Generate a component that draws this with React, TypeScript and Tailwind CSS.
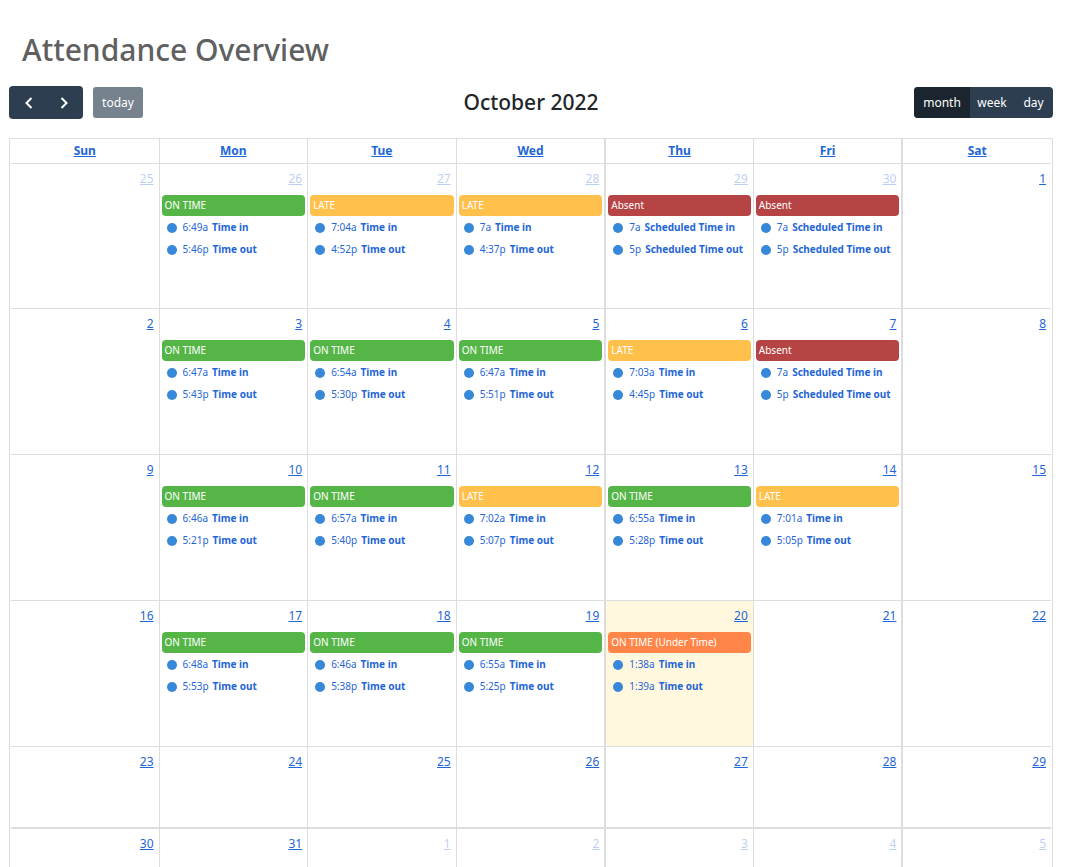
import { useState } from "react";

type Status = "ontime" | "late" | "absent" | "under";
type Day = { date: number; other?: boolean; today?: boolean; status?: Status; entries?: [string, string][] };

const dayNames = ["Sun", "Mon", "Tue", "Wed", "Thu", "Fri", "Sat"];

const statusStyle: Record<Status, string> = {
  ontime: "bg-[#55b647]",
  late: "bg-[#ffc04c]",
  absent: "bg-[#b64444]",
  under: "bg-[#ff8648]",
};

const statusLabel: Record<Status, string> = {
  ontime: "ON TIME",
  late: "LATE",
  absent: "Absent",
  under: "ON TIME (Under Time)",
};

const worked = (date: number, status: Status, timeIn: string, timeOut: string, extra: Partial<Day> = {}): Day => ({
  date,
  status,
  entries: [
    [timeIn, "Time in"],
    [timeOut, "Time out"],
  ],
  ...extra,
});

const absent = (date: number, extra: Partial<Day> = {}): Day => ({
  date,
  status: "absent",
  entries: [
    ["7a", "Scheduled Time in"],
    ["5p", "Scheduled Time out"],
  ],
  ...extra,
});

const other = { other: true };

const weeks: { height: string; days: Day[] }[] = [
  {
    height: "h-[145px]",
    days: [
      { date: 25, other: true },
      worked(26, "ontime", "6:49a", "5:46p", other),
      worked(27, "late", "7:04a", "4:52p", other),
      worked(28, "late", "7a", "4:37p", other),
      absent(29, other),
      absent(30, other),
      { date: 1 },
    ],
  },
  {
    height: "h-[146px]",
    days: [
      { date: 2 },
      worked(3, "ontime", "6:47a", "5:43p"),
      worked(4, "ontime", "6:54a", "5:30p"),
      worked(5, "ontime", "6:47a", "5:51p"),
      worked(6, "late", "7:03a", "4:45p"),
      absent(7),
      { date: 8 },
    ],
  },
  {
    height: "h-[146px]",
    days: [
      { date: 9 },
      worked(10, "ontime", "6:46a", "5:21p"),
      worked(11, "ontime", "6:57a", "5:40p"),
      worked(12, "late", "7:02a", "5:07p"),
      worked(13, "ontime", "6:55a", "5:28p"),
      worked(14, "late", "7:01a", "5:05p"),
      { date: 15 },
    ],
  },
  {
    height: "h-[146px]",
    days: [
      { date: 16 },
      worked(17, "ontime", "6:48a", "5:53p"),
      worked(18, "ontime", "6:46a", "5:38p"),
      worked(19, "ontime", "6:55a", "5:25p"),
      worked(20, "under", "1:38a", "1:39a", { today: true }),
      { date: 21 },
      { date: 22 },
    ],
  },
  {
    height: "h-[81px]",
    days: [23, 24, 25, 26, 27, 28, 29].map((date) => ({ date })),
  },
  {
    height: "h-[82px]",
    days: [{ date: 30 }, { date: 31 }, ...[1, 2, 3, 4, 5].map((date) => ({ date, other: true }))],
  },
];

/* Vertical rules between columns; Thursday and Saturday open with a doubled rule. */
const columnRule = (col: number) => `${col < 6 ? "border-r" : ""} ${col === 4 || col === 6 ? "border-l" : ""}`;

function Chevron({ d }: { d: string }) {
  return (
    <svg viewBox="0 0 16 16" className="size-4" fill="none" stroke="currentColor" strokeWidth="2" aria-hidden="true">
      <path d={d} />
    </svg>
  );
}

function DayCell({ day, col, lastWeek }: { day: Day; col: number; lastWeek: boolean }) {
  return (
    <td
      className={`border-[#dddddd] p-0 align-top ${lastWeek ? "border-t-2" : "border-t"} ${columnRule(col)} ${day.today ? "bg-[#fff8df]" : ""}`}
    >
      <div className={`flex h-[31px] justify-end pr-[5px] text-[12px] leading-[30px] ${day.other ? "opacity-30" : ""}`}>
        <a href="#" className="text-[#1f66d6] underline">
          {day.date}
        </a>
      </div>
      {day.status && (
        <div className="mx-[2px] text-[10px]">
          <a href="#" className={`block h-[21px] rounded-[4px] px-[3px] leading-[20px] text-white ${statusStyle[day.status]}`}>
            {statusLabel[day.status]}
          </a>
          {day.entries?.map(([time, label]) => (
            <a key={label} href="#" className="flex h-[22px] items-center whitespace-nowrap pl-[5px] text-[#1f66d6]">
              <span className="mr-[6px] mt-[2px] size-[10px] shrink-0 rounded-full bg-[#3788d8]" />
              <span className="mr-[4px]">{time}</span>
              <span className="font-bold">{label}</span>
            </a>
          ))}
        </div>
      )}
    </td>
  );
}

export default function App() {
  const [view, setView] = useState("month");
  return (
    <main className="h-screen overflow-hidden bg-white pl-[9px] pr-[19px] pt-[30px] font-['Noto_Sans','Open_Sans',sans-serif] text-[#212529]">
      <h1 className="pl-[13px] text-[30px] font-medium leading-[40px] text-[#606060]">Attendance Overview</h1>
      <div className="mt-4 flex h-[33px] items-center">
        <div className="flex flex-1 items-center gap-[10px] text-[12px]">
          <div className="flex h-[33px] overflow-hidden rounded-[4px] bg-[#2c3e50] text-white">
            <button aria-label="Previous" className="flex w-[37px] items-center justify-center pl-[2px]">
              <Chevron d="M10.5 3 5.5 8l5 5" />
            </button>
            <button aria-label="Next" className="flex w-[37px] items-center justify-center pr-[2px]">
              <Chevron d="m5.5 3 5 5-5 5" />
            </button>
          </div>
          <button className="h-[31px] w-[50px] rounded-[3px] bg-[#76828d] text-white">today</button>
        </div>
        <h2 className="text-[21px] font-medium">October 2022</h2>
        <div className="flex flex-1 justify-end text-[12px]">
          <div className="flex h-[31px] overflow-hidden rounded-[4px] bg-[#2c3e50] text-white">
            {[
              ["month", "w-[56px]"],
              ["week", "w-[44px]"],
              ["day", "w-[39px]"],
            ].map(([name, width]) => (
              <button key={name} onClick={() => setView(name)} className={`${width} ${view === name ? "bg-[#1a252f]" : ""}`}>
                {name}
              </button>
            ))}
          </div>
        </div>
      </div>
      <table className="mt-[19px] w-full table-fixed border-separate border-spacing-0 border border-[#dddddd] px-px">
        <thead>
          <tr className="h-[24px]">
            {dayNames.map((name, col) => (
              <th key={name} className={`border-[#dddddd] p-0 text-[12px] leading-[24px] ${columnRule(col)}`}>
                <a href="#" className="font-bold text-[#1f66d6] underline">
                  {name}
                </a>
              </th>
            ))}
          </tr>
        </thead>
        <tbody>
          {weeks.map((week, index) => (
            <tr key={index} className={week.height}>
              {week.days.map((day, col) => (
                <DayCell key={col} day={day} col={col} lastWeek={index === weeks.length - 1} />
              ))}
            </tr>
          ))}
        </tbody>
      </table>
    </main>
  );
}
